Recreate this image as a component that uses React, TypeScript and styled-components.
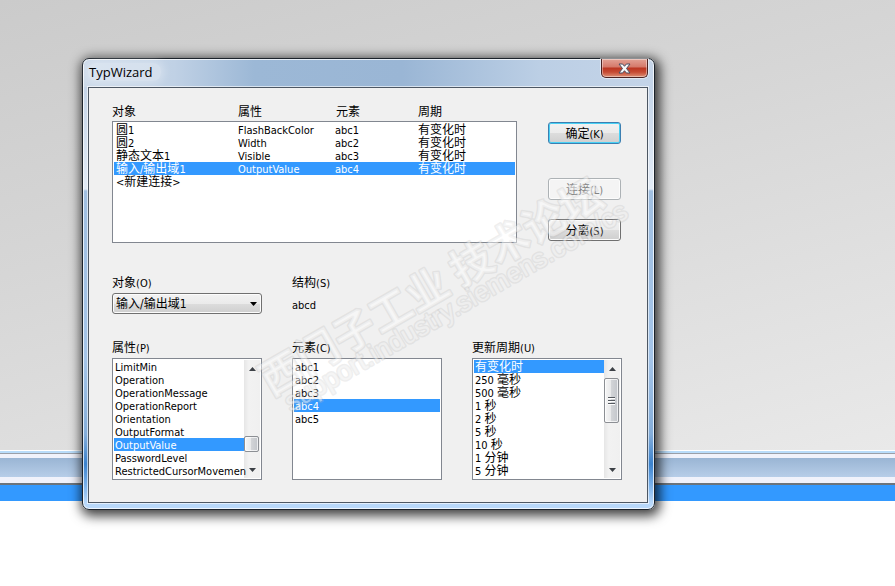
import React, { useState } from "react";
import styled, { createGlobalStyle, css } from "styled-components";

const GlobalStyle = createGlobalStyle`
  *, *::before, *::after { box-sizing: border-box; }
  body {
    margin: 0;
    background: #fff;
    color: #000;
    font: 11px/15px "DejaVu Sans Condensed", "Noto Sans CJK SC", sans-serif;
  }
`;

/* ---------- desktop ---------- */

const Desktop = styled.div`
  position: relative;
  min-height: 100vh;
  overflow: hidden;
`;

const Backdrop = styled.div`
  height: 450px;
  background: linear-gradient(165deg, #cbcbcb 0%, #d6d6d6 40%, #e9e9e9 100%);
`;

const BackWindowEdge = styled.div`
  height: 8px;
  border-top: 1px solid #fff;
  background: linear-gradient(#b9dcfa 0 2px, #9a9fa8 2px 3px, #f0f2fb 3px);
`;

const BackWindowBar = styled.div`
  height: 19px;
  background: linear-gradient(#9ab5d4, #b6cde8);
`;

const BackWindowBase = styled.div`
  height: 8px;
  border-bottom: 2px solid #6c747c;
  background: #f0f2fb;
`;

const BackSelection = styled.div`
  height: 16px;
  background: #3399ff;
`;

/* ---------- dialog frame ---------- */

const Frame = styled.section`
  position: absolute;
  top: 58px;
  left: 82px;
  right: 240px;
  padding: 0 6px 6px 5px;
  border: 1px solid #1c232b;
  border-radius: 7px;
  background:
    linear-gradient(90deg, #cbd9e9 0%, #c0d1e5 16%, #9cb8d6 30%, #9ab6d5 56%, #bccfe5 80%, #c4d4e8 100%)
      top / 100% 28px no-repeat,
    linear-gradient(#c4d4e8 28px, #e2ebf6 130px, #a0bfe1 132px, #a4c4e8 300px, #84add9 375px, #3b82cd 405px, #76aee8 425px, #b8d8fa 444px);
  box-shadow:
    inset 0 0 0 1px rgba(255, 255, 255, 0.75),
    2px 3px 12px 3px rgba(0, 0, 0, 0.75);
`;

const TitleBar = styled.header`
  display: flex;
  justify-content: space-between;
  align-items: flex-start;
  height: 28px;
`;

const Title = styled.h1`
  margin: 4px 0 0;
  padding: 0 8px 0 1px;
  border-radius: 8px;
  background: rgba(255, 255, 255, 0.3);
  box-shadow: 0 0 8px 3px rgba(255, 255, 255, 0.3);
  font: 400 13px/18px "Open Sans", sans-serif;
`;

const CloseButton = styled.button`
  display: flex;
  align-items: center;
  justify-content: center;
  width: 47px;
  height: 19px;
  padding: 0;
  border: 1px solid #4c2322;
  border-top: 0;
  border-radius: 0 0 5px 5px;
  background: linear-gradient(#e2a295 0, #d5796a 8px, #bb3622 9px, #c64a32 13px, #dd9076 18px);
  box-shadow: inset 0 0 0 1px rgba(255, 255, 255, 0.4), 0 0 0 1px rgba(255, 255, 255, 0.5);
`;

const Client = styled.div`
  position: relative;
  display: flex;
  flex-direction: column;
  padding: 15px 25px 22px 23px;
  border: 1px solid #4d5763;
  background: #f0f0f0;
  box-shadow: 0 0 0 1px rgba(255, 255, 255, 0.6);
`;

const TopArea = styled.div`
  display: grid;
  grid-template-columns: 1fr 73px;
  gap: 31px;
  padding-right: 1px;
  margin-bottom: 31px;
`;

const Han = styled.span`
  font-size: 12px;
`;

/* ---------- connection table ---------- */

const Table = styled.table`
  display: block;
`;

const TableHead = styled.thead`
  display: block;
  height: 18px;
`;

const TableBody = styled.tbody`
  display: block;
  height: 122px;
  padding: 1px;
  border: 1px solid #828790;
  background: #fff;
`;

const HeadRow = styled.tr`
  display: grid;
  grid-template-columns: 126px 98px 82px 1fr;
`;

const HeadCell = styled.th`
  padding: 0;
  font-weight: 400;
  line-height: 18px;
  text-align: left;
`;

const selectable = css<{ $selected: boolean }>`
  height: 13px;
  line-height: 15px;
  white-space: nowrap;
  cursor: default;
  color: ${(p) => (p.$selected ? "#fff" : "#000")};
  background: ${(p) => (p.$selected ? "#3399ff" : "transparent")};
`;

const BodyRow = styled.tr`
  ${selectable}
  display: grid;
  grid-template-columns: 124px 97px 83px 1fr;
`;

const Cell = styled.td`
  height: 13px;
  padding: 0;
  &:first-child { padding-left: 2px; }
`;

/* ---------- buttons ---------- */

const ButtonColumn = styled.div`
  display: flex;
  flex-direction: column;
  gap: 19px;
  padding-top: 19px;
`;

const PushButton = styled.button<{ $primary?: boolean }>`
  height: 22px;
  padding: 2px 0 0;
  margin-bottom: ${(p) => (p.$primary ? "15px" : "0")};
  border: 1px solid ${(p) => (p.$primary ? "#3c7fb1" : "#707070")};
  border-radius: 3px;
  background: linear-gradient(#f2f2f2 0, #ebebeb 50%, #dddddd 50%, #cfcfcf 100%);
  box-shadow: inset 0 0 0 1px ${(p) => (p.$primary ? "#48d1f5" : "#fcfcfc")};
  color: #000;
  font: inherit;
  &:disabled {
    border-color: #adb2b5;
    background: #f4f4f4;
    color: #838383;
  }
`;

/* ---------- fields and list boxes ---------- */

const ThreeColumns = styled.div`
  display: grid;
  grid-template-columns: repeat(3, 1fr);
  column-gap: 30px;
`;

const FieldRow = styled(ThreeColumns)`
  margin-bottom: 22px;
`;

const Field = styled.div`
  display: flex;
  flex-direction: column;
  gap: 3px;
  min-width: 0;
`;

const caption = css`
  height: 16px;
  line-height: 18px;
`;

const Label = styled.label`
  ${caption}
`;

const Caption = styled.span`
  ${caption}
`;

const SelectBox = styled.div`
  display: grid;
  align-items: center;
  & > * { grid-area: 1 / 1; }
  & > svg { justify-self: end; margin-right: 5px; pointer-events: none; fill: #000; }
`;

const Select = styled.select`
  appearance: none;
  width: 100%;
  height: 21px;
  padding: 2px 16px 0 3px;
  border: 1px solid #707070;
  border-radius: 3px;
  background: linear-gradient(#f2f2f2 0, #ebebeb 50%, #dddddd 50%, #cfcfcf 100%);
  box-shadow: inset 0 0 0 1px #fcfcfc;
  color: #000;
  font: inherit;
  font-size: 12px;
`;

const Value = styled.output`
  line-height: 26px;
  height: 24px;
`;

const ListFrame = styled.div`
  display: flex;
  height: 122px;
  padding: 1px;
  border: 1px solid #828790;
  background: #fff;
`;

const Options = styled.ul`
  flex: 1;
  min-width: 0;
  z-index: 1;
  margin: 0;
  padding: 0;
  list-style: none;
`;

const Option = styled.li`
  ${selectable}
  padding-left: 1px;
`;

const Bar = styled.div`
  display: flex;
  flex-direction: column;
  width: 16px;
  background: linear-gradient(90deg, #e6e6e6, #f2f2f2 30%, #f0f0f0);
`;

const BarButton = styled.button`
  display: flex;
  align-items: center;
  justify-content: center;
  height: 17px;
  padding: 0;
  border: 0;
  background: none;
`;

const BarSpace = styled.div<{ $grow: number }>`
  flex: ${(p) => p.$grow} 0 0;
`;

const Thumb = styled.div<{ $size: number }>`
  display: flex;
  flex-direction: column;
  align-items: center;
  justify-content: center;
  gap: 1px;
  height: ${(p) => p.$size}px;
  margin-right: 1px;
  border: 1px solid #8c8f94;
  border-radius: 2px;
  background: linear-gradient(90deg, #f6f6f6, #e8e9ea 45%, #d2d4d7 50%, #c2c5ca);
  box-shadow: inset 0 0 0 1px rgba(255, 255, 255, 0.7);
`;

const Grip = styled.span`
  width: 7px;
  height: 2px;
  border-top: 1px solid #55595f;
  background: #fff;
`;

const Watermark = styled.svg`
  position: absolute;
  inset: 0;
  z-index: 2;
  width: 100%;
  height: 100%;
  overflow: visible;
  pointer-events: none;
  fill: rgba(255, 255, 255, 0.45);
  stroke: rgba(180, 180, 180, 0.22);
  stroke-width: 3px;
  stroke-linejoin: round;
  paint-order: stroke;
`;

const WatermarkTitle = styled.text`
  font: 700 42px "Noto Sans CJK SC", sans-serif;
`;

const WatermarkSite = styled.text`
  font: 400 27px "Liberation Sans", sans-serif;
`;

/* ---------- pieces ---------- */

/* Chinese runs are set one pixel larger than the Latin text around them. */
function Mixed({ text }: { text: string }) {
  return (
    <>
      {text.split(/([\u4e00-\u9fff]+)/).map((part, i) => (i % 2 ? <Han key={i}>{part}</Han> : part))}
    </>
  );
}

const ArrowIcon = styled.svg`
  fill: #3c4046;
`;

function Arrow({ down = false }: { down?: boolean }) {
  return (
    <ArrowIcon width="7" height="4" viewBox="0 0 7 4" aria-hidden="true">
      <path d={down ? "M0 0h7L3.5 4z" : "M0 4h7L3.5 0z"} />
    </ArrowIcon>
  );
}

interface Scroll {
  above: number;
  size: number;
  below: number;
  grip?: boolean;
}

function ScrollBar({ above, size, below, grip }: Scroll) {
  return (
    <Bar>
      <BarButton type="button" aria-label="向上滚动"><Arrow /></BarButton>
      <BarSpace $grow={above} />
      <Thumb $size={size}>
        {grip && <><Grip /><Grip /><Grip /></>}
      </Thumb>
      <BarSpace $grow={below} />
      <BarButton type="button" aria-label="向下滚动"><Arrow down /></BarButton>
    </Bar>
  );
}

interface ListBoxProps {
  id: string;
  label: string;
  items: string[];
  initial: number;
  scroll?: Scroll;
}

function ListBox({ id, label, items, initial, scroll }: ListBoxProps) {
  const [selected, setSelected] = useState(initial);
  return (
    <Field>
      <Caption id={id}><Mixed text={label} /></Caption>
      <ListFrame>
        <Options role="listbox" aria-labelledby={id} tabIndex={0}>
          {items.map((item, i) => (
            <Option
              key={item}
              role="option"
              aria-selected={i === selected}
              $selected={i === selected}
              onClick={() => setSelected(i)}
            >
              <Mixed text={item} />
            </Option>
          ))}
        </Options>
        {scroll && <ScrollBar {...scroll} />}
      </ListFrame>
    </Field>
  );
}

const columns = ["对象", "属性", "元素", "周期"];

const connections = [
  ["圆1", "FlashBackColor", "abc1", "有变化时"],
  ["圆2", "Width", "abc2", "有变化时"],
  ["静态文本1", "Visible", "abc3", "有变化时"],
  ["输入/输出域1", "OutputValue", "abc4", "有变化时"],
  ["<新建连接>", "", "", ""],
];

const properties = [
  "LimitMin", "Operation", "OperationMessage", "OperationReport", "Orientation",
  "OutputFormat", "OutputValue", "PasswordLevel", "RestrictedCursorMovemen",
];

const elements = ["abc1", "abc2", "abc3", "abc4", "abc5"];

const cycles = [
  "有变化时", "250 毫秒", "500 毫秒", "1 秒", "2 秒", "5 秒", "10 秒", "1 分钟", "5 分钟",
];

export default function App() {
  const [row, setRow] = useState(3);
  return (
    <Desktop>
      <GlobalStyle />
      <Backdrop />
      <BackWindowEdge />
      <BackWindowBar />
      <BackWindowBase />
      <BackSelection />
      <Frame role="dialog" aria-labelledby="dialog-title">
        <TitleBar>
          <Title id="dialog-title">TypWizard</Title>
          <CloseButton type="button" aria-label="关闭">
            <svg width="13" height="11" viewBox="0 0 13 11" aria-hidden="true">
              <path
                d="M1 1h3.6l1.9 2.3L8.4 1H12L8.5 5.5 12 10H8.4L6.5 7.7 4.6 10H1l3.5-4.5z"
                fill="#f8f8f8"
                stroke="#4a4f63"
              />
            </svg>
          </CloseButton>
        </TitleBar>
        <Client>
          <TopArea>
            <Table>
              <TableHead>
                <HeadRow>
                  {columns.map((c) => <HeadCell key={c} scope="col"><Mixed text={c} /></HeadCell>)}
                </HeadRow>
              </TableHead>
              <TableBody>
                {connections.map((cells, i) => (
                  <BodyRow key={cells[0]} $selected={i === row} onClick={() => setRow(i)}>
                    {cells.map((text, n) => <Cell key={n}><Mixed text={text} /></Cell>)}
                  </BodyRow>
                ))}
              </TableBody>
            </Table>
            <ButtonColumn>
              <PushButton type="button" $primary><Mixed text="确定(K)" /></PushButton>
              <PushButton type="button" disabled><Mixed text="连接(L)" /></PushButton>
              <PushButton type="button"><Mixed text="分离(S)" /></PushButton>
            </ButtonColumn>
          </TopArea>
          <FieldRow>
            <Field>
              <Label htmlFor="object"><Mixed text="对象(O)" /></Label>
              <SelectBox>
                <Select id="object" defaultValue="输入/输出域1">
                  <option>圆1</option>
                  <option>圆2</option>
                  <option>静态文本1</option>
                  <option>输入/输出域1</option>
                </Select>
                <Arrow down />
              </SelectBox>
            </Field>
            <Field>
              <Label htmlFor="structure"><Mixed text="结构(S)" /></Label>
              <Value id="structure">abcd</Value>
            </Field>
          </FieldRow>
          <ThreeColumns>
            <ListBox
              id="properties"
              label="属性(P)"
              items={properties}
              initial={6}
              scroll={{ above: 59, size: 16, below: 9 }}
            />
            <ListBox id="elements" label="元素(C)" items={elements} initial={3} />
            <ListBox
              id="cycles"
              label="更新周期(U)"
              items={cycles}
              initial={0}
              scroll={{ above: 1, size: 45, below: 38, grip: true }}
            />
          </ThreeColumns>
          <Watermark aria-hidden="true">
            <WatermarkTitle transform="translate(182 309) rotate(-30)">西门子工业 技术论坛</WatermarkTitle>
            <WatermarkSite transform="translate(202 324) rotate(-30)">support.industry.siemens.com/cs</WatermarkSite>
          </Watermark>
        </Client>
      </Frame>
    </Desktop>
  );
}
